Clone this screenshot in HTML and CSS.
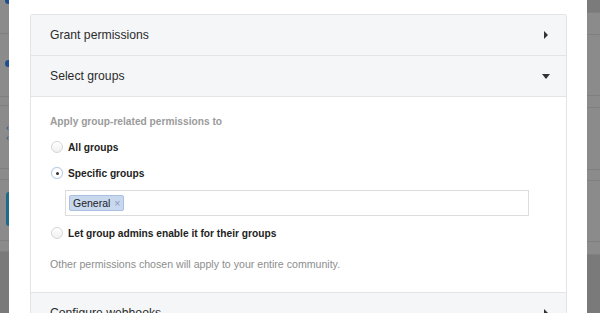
FILE: index.html
```html
<!DOCTYPE html>
<html lang="en">
<head>
  <meta charset="UTF-8" />
  <title>Permissions</title>
  <link rel="stylesheet" href="styles.css">
</head>
<body>
  <div class="screen">
    <div class="backdrop left">
      <div class="bd-row" style="height:33px"><span class="dot top"></span></div>
      <div class="bd-row" style="height:62px"><span class="dot mid"></span></div>
      <div class="bd-row" style="height:8px"></div>
      <div class="bd-row" style="height:62px"><span class="arrows">‹<br>‹</span></div>
      <div class="bd-row" style="height:10px"></div>
      <div class="bd-row" style="height:60px"><span class="teal"></span></div>
      <div class="bd-row" style="height:10px"></div>
      <div class="bd-row dark"></div>
    </div>

    <div class="modal">
      <div class="panel">
        <div class="section-head">
          <span>Grant permissions</span>
          <span class="caret right"></span>
        </div>
        <div class="section-head">
          <span>Select groups</span>
          <span class="caret down"></span>
        </div>
        <div class="section-body">
          <p class="hint">Apply group-related permissions to</p>
          <label class="radio"><span class="circle"></span>All groups</label>
          <label class="radio"><span class="circle checked"></span>Specific groups</label>
          <div class="tag-input">
            <span class="tag">General <span class="x">×</span></span>
          </div>
          <label class="radio"><span class="circle"></span>Let group admins enable it for their groups</label>
          <p class="note">Other permissions chosen will apply to your entire community.</p>
        </div>
        <div class="section-head">
          <span>Configure webhooks</span>
          <span class="caret right"></span>
        </div>
      </div>
    </div>

    <div class="backdrop right">
      <div class="bd-row topband" style="height:12px"></div>
      <div class="bd-row" style="height:21px"></div>
      <div class="bd-row" style="height:60px"></div>
      <div class="bd-row" style="height:11px"></div>
      <div class="bd-row" style="height:61px"></div>
      <div class="bd-row" style="height:10px"></div>
      <div class="bd-row" style="height:60px"></div>
      <div class="bd-row" style="height:12px"></div>
      <div class="bd-row dark"></div>
    </div>
  </div>
</body>
</html>
```

FILE: styles.css
```css
/* General */
body {
  margin: 0;
  font-family: "Liberation Sans", Arial, sans-serif;
  color: #333;
  overflow: hidden;
}

.screen {
  display: flex;
  height: 313px;
}

/* Backdrop behind the modal */
.backdrop {
  background: #8b8b8b;
  display: flex;
  flex-direction: column;
}

.backdrop.left {
  width: 9px;
}

.backdrop.right {
  width: 13px;
}

.bd-row {
  position: relative;
  border-bottom: 1px solid #7f7f7f;
  flex-shrink: 0;
}

.bd-row.dark {
  flex: 1;
  background: #7a7a7a;
  border-bottom: none;
}

.bd-row.topband {
  background: #7b7b7b;
}

.dot {
  position: absolute;
  right: 0;
  width: 4px;
  height: 7px;
  background: #1d4f91;
  border-radius: 4px 0 0 4px;
}

.dot.top {
  top: -3px;
}

.dot.mid {
  top: 26px;
}

.arrows {
  position: absolute;
  right: 0;
  top: 17px;
  font-size: 9px;
  line-height: 10px;
  color: #1d4f91;
}

.teal {
  position: absolute;
  right: 0;
  top: 12px;
  width: 3px;
  height: 34px;
  background: #1d6a8a;
  border-radius: 3px 0 0 3px;
}

/* Modal */
.modal {
  width: 578px;
  background: #fff;
  padding: 14px 20px 0 21px;
  box-sizing: border-box;
}

.panel {
  border: 1px solid #e3e4e6;
  border-radius: 2px;
}

.section-head {
  height: 40px;
  background: #f5f6f8;
  border-bottom: 1px solid #e3e4e6;
  display: flex;
  align-items: center;
  justify-content: space-between;
  padding: 0 16px 0 19px;
  font-size: 12.2px;
  color: #2b2b2b;
}

.caret {
  width: 0;
  height: 0;
  border-style: solid;
}

.caret.right {
  border-width: 4px 0 4px 4px;
  border-color: transparent transparent transparent #333;
  margin-right: 2px;
}

.caret.down {
  border-width: 5px 4px 0 4px;
  border-color: #333 transparent transparent transparent;
}

.section-body {
  background: #fff;
  border-bottom: 1px solid #e3e4e6;
  padding: 19px 19px 22px 19px;
  font-size: 10.2px;
}

.hint {
  margin: 0 0 12px;
  color: #9b9b9b;
  font-weight: bold;
}

.radio {
  display: flex;
  align-items: center;
  height: 16px;
  margin-bottom: 10px;
  font-weight: bold;
  color: #222;
}

.circle {
  width: 12px;
  height: 12px;
  border-radius: 50%;
  border: 1px solid #d6d6d6;
  background: linear-gradient(#fff, #f0f0f0);
  margin: 0 5px 0 1px;
  box-sizing: border-box;
  position: relative;
}

.circle.checked {
  border-color: #b9cbe6;
  background: #fff;
  box-shadow: 0 0 1px #c8d8ef;
}

.circle.checked::after {
  content: "";
  position: absolute;
  left: 3.5px;
  top: 3.5px;
  width: 3px;
  height: 3px;
  border-radius: 50%;
  background: #333;
}

.tag-input {
  margin: -1px 18px 9px 15px;
  height: 26px;
  border: 1px solid #dcdcdc;
  box-sizing: border-box;
  display: flex;
  align-items: center;
  padding-left: 3px;
}

.tag {
  background: #c8d8ef;
  border: 1px solid #a9c0e0;
  border-radius: 2px;
  padding: 1px 3px 1px 3px;
  font-size: 10.5px;
  color: #222;
}

.tag .x {
  color: #8a9bb5;
  margin-left: 1px;
}

.note {
  margin: 17px 0 0;
  color: #8e8e8e;
  font-size: 10.6px;
}
```
